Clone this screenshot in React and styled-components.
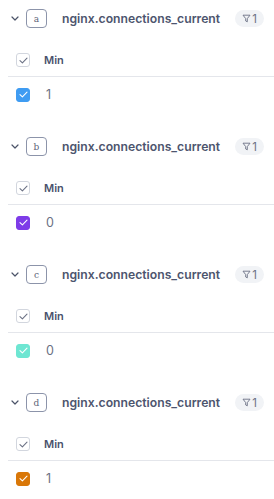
import React from "react";
import styled, { createGlobalStyle } from "styled-components";

const GlobalStyle = createGlobalStyle`
  html, body {
    margin: 0;
    padding: 0;
    background: #ffffff;
    font-family: Inter, "Noto Sans", sans-serif;
  }
`;

const queries = [
  { id: "a", name: "nginx.connections_current", value: "1", color: "#3f9cf2" },
  { id: "b", name: "nginx.connections_current", value: "0", color: "#7e3ce8" },
  { id: "c", name: "nginx.connections_current", value: "0", color: "#6ee6d2" },
  { id: "d", name: "nginx.connections_current", value: "1", color: "#d97708" },
];

const Check = ({ stroke }) => (
  <svg width="9" height="7" viewBox="0 0 9 7" fill="none">
    <polyline
      points="1,3.6 3.4,5.8 8,1.2"
      stroke={stroke}
      strokeWidth="1.1"
      strokeLinecap="round"
      strokeLinejoin="round"
    />
  </svg>
);

const Chevron = () => (
  <svg width="8" height="5" viewBox="0 0 8 5" fill="none">
    <polyline
      points="1,1 4,4 7,1"
      stroke="#4b5368"
      strokeWidth="1.2"
      strokeLinecap="round"
      strokeLinejoin="round"
    />
  </svg>
);

const Funnel = () => (
  <svg width="9" height="9" viewBox="0 0 9 9" fill="none">
    <path
      d="M1 1.2h7L5.3 4.6v3.2L3.7 7V4.6z"
      stroke="#6b7184"
      strokeWidth="0.9"
      strokeLinejoin="round"
    />
  </svg>
);

const App = () => {
  return (
    <>
      <GlobalStyle />
      <List>
        {queries.map((q) => (
          <Group key={q.id}>
            <Header>
              <Toggle>
                <Chevron />
              </Toggle>
              <LetterBox>{q.id}</LetterBox>
              <Title>{q.name}</Title>
              <Badge>
                <Funnel />
                <span>1</span>
              </Badge>
            </Header>
            <Table>
              <HeadRow>
                <Box>
                  <Check stroke="#6b7184" />
                </Box>
                <ColName>Min</ColName>
              </HeadRow>
              <ValueRow>
                <Box $fill={q.color}>
                  <Check stroke="#ffffff" />
                </Box>
                <Value>{q.value}</Value>
              </ValueRow>
            </Table>
          </Group>
        ))}
      </List>
    </>
  );
};

const List = styled.div`
  display: flex;
  flex-direction: column;
  width: 274px;
`;

const Group = styled.section`
  display: flex;
  flex-direction: column;
  height: 128px;
`;

const Header = styled.div`
  display: flex;
  align-items: center;
  height: 37px;
  padding-left: 11px;
`;

const Toggle = styled.span`
  display: flex;
  align-items: center;
  width: 15px;
`;

const LetterBox = styled.span`
  display: flex;
  align-items: center;
  justify-content: center;
  box-sizing: border-box;
  width: 21px;
  height: 19px;
  border: 1px solid #8c94aa;
  border-radius: 4px;
  font-family: "DejaVu Serif", "Liberation Serif", serif;
  font-size: 9px;
  color: #5b6378;
`;

const Title = styled.span`
  margin-left: 15px;
  font-size: 12.2px;
  font-weight: 600;
  color: #4d556e;
  white-space: nowrap;
  flex: 1;
`;

const Badge = styled.span`
  display: flex;
  align-items: center;
  justify-content: center;
  gap: 1px;
  width: 29px;
  height: 17px;
  margin-right: 10px;
  border-radius: 9px;
  background: #f1f3f6;
  font-size: 11.5px;
  color: #6b7184;
`;

const Table = styled.div`
  display: flex;
  flex-direction: column;
  margin-top: 7px;
  margin-left: 8px;
`;

const Row = styled.div`
  display: flex;
  align-items: center;
  padding-left: 8px;
`;

const HeadRow = styled(Row)`
  height: 32px;
  border-bottom: 1px solid #e4e6eb;
`;

const ValueRow = styled(Row)`
  height: 35px;
`;

const Box = styled.span`
  display: flex;
  align-items: center;
  justify-content: center;
  box-sizing: border-box;
  width: 14px;
  height: 14px;
  border-radius: 3px;
  border: 1px solid ${(p) => p.$fill || "#d2d6de"};
  background: ${(p) => p.$fill || "#ffffff"};
`;

const ColName = styled.span`
  margin-left: 14px;
  font-size: 11px;
  font-weight: 600;
  color: #4a526c;
`;

const Value = styled.span`
  margin-left: 16px;
  font-size: 12.5px;
  color: #6b7184;
`;

export default App;
